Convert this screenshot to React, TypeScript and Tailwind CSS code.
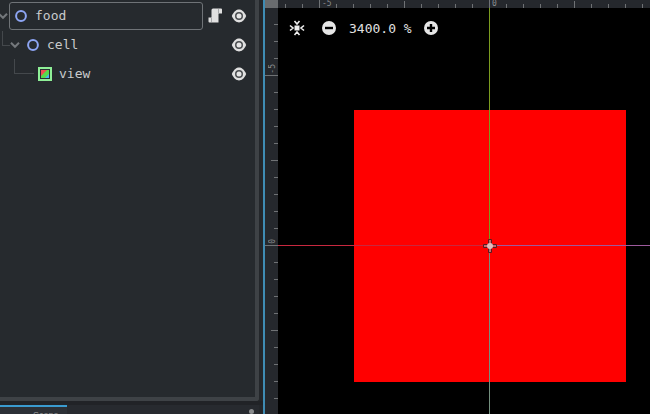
import React from "react";

const mono = { fontFamily: '"DejaVu Sans Mono", monospace' };

function Eye() {
  return (
    <svg width="16" height="16" viewBox="0 0 16 16" className="shrink-0">
      <path d="M0.8 8 C3 3.2 5.5 1.6 8 1.6 C10.5 1.6 13 3.2 15.2 8 C13 12.8 10.5 14.4 8 14.4 C5.5 14.4 3 12.8 0.8 8 Z" fill="#e0e0e0" />
      <circle cx="8" cy="8" r="4" fill="#4a4d50" />
      <circle cx="8" cy="8" r="2.5" fill="#e6e6e6" />
    </svg>
  );
}

function Ring() {
  return (
    <svg width="14" height="14" viewBox="0 0 14 14" className="shrink-0">
      <circle cx="7" cy="7" r="4.9" fill="none" stroke="#8da5f3" strokeWidth="2" />
    </svg>
  );
}

function Chevron() {
  return (
    <svg width="10" height="8" viewBox="0 0 10 8" className="shrink-0">
      <path d="M1 1.8 L5 5.8 L9 1.8" fill="none" stroke="#74787c" strokeWidth="2" />
    </svg>
  );
}

function Script() {
  return (
    <svg width="14" height="15" viewBox="0 0 14 15" className="shrink-0">
      <path d="M5 0.5 H13 Q14 0.5 14 1.5 V5.5 H10.5 V14.5 H1.5 Q0.5 14.5 0.5 13.5 V9.5 H3.5 V2 Q3.5 0.5 5 0.5 Z" fill="#e0e0e0" />
      <path d="M10.5 1 V5 M3.5 10 V14" stroke="#a5a7a9" strokeWidth="1" />
    </svg>
  );
}

function ViewIcon() {
  return (
    <svg width="14" height="14" viewBox="0 0 14 14" className="shrink-0">
      <rect x="1" y="1" width="12" height="12" fill="#2a2e33" stroke="#8eef97" strokeWidth="2" />
      <path d="M3 3 H11 V11 H3 Z" fill="#56dc4a" />
      <path d="M3 3 H9 L3 9 Z" fill="#ef5050" />
      <path d="M11 11 H7 L11 7 Z" fill="#45b8ef" />
    </svg>
  );
}

function Row({ sel, children, label, script }: { sel?: boolean; children: React.ReactNode; label: string; script?: boolean }) {
  return (
    <div className="flex items-center h-[29px] relative">
      {sel && <div className="absolute left-[9px] top-[1px] w-[194px] h-[28px] border border-[#6f7377] rounded-[3px]" />}
      <div className="flex items-center flex-1">
        {children}
        <span className="text-[13px] text-[#c9cbcd] ml-[7px] leading-none">{label}</span>
      </div>
      {script && <div className="mr-[9px]"><Script /></div>}
      <div className="mr-[8px]"><Eye /></div>
    </div>
  );
}

type Kind = "major" | "mid" | "minor";
const kindOf = (offset: number): Kind => (offset % 170 === 0 ? "major" : offset % 85 === 0 ? "mid" : "minor");

const hTicks = Array.from({ length: 22 }, (_, i) => 285 + i * 17);
const vTicks = Array.from({ length: 23 }, (_, i) => 24 + i * 17);
const hLabels: Record<number, string> = { 319: "-5", 489: "0" };
const vLabels: Record<number, string> = { 75: "-5", 245: "0", 415: "5" };

function HTick({ x }: { x: number }) {
  const kind = kindOf(x - 319);
  return (
    <div className="relative w-[17px] h-full shrink-0 flex items-end">
      <div className={`w-px bg-[#6f7275] ${kind === "major" ? "h-[8px]" : kind === "mid" ? "h-[7px]" : "h-[4px]"}`} />
      {hLabels[x] && <span className="ml-[2px] self-start text-[8px] leading-[7px] text-[#8a8d90]">{hLabels[x]}</span>}
    </div>
  );
}

function VTick({ y }: { y: number }) {
  const kind = kindOf(y - 75);
  return (
    <div className="relative h-[17px] w-full shrink-0 flex flex-col items-end">
      <div className={`h-px bg-[#6f7275] ${kind === "major" ? "w-[13px]" : kind === "mid" ? "w-[7px]" : "w-[4px]"}`} />
      {vLabels[y] && (
        <span className="absolute left-[4px] bottom-[18px] text-[8px] leading-[8px] text-[#8a8d90] [writing-mode:vertical-rl] rotate-180">{vLabels[y]}</span>
      )}
    </div>
  );
}

export default function App() {
  return (
    <div className="relative flex w-[650px] h-[414px] overflow-hidden bg-[#24272b]" style={mono}>
      <div className="w-[263px] shrink-0 flex flex-col">
        <div className="h-[401px] w-[259px] shrink-0 border-r-4 border-b-4 border-[#3e4246] bg-[#262a2e] rounded-br-[3px] relative pt-[1px]">
          <div className="absolute left-[2px] top-[31px] w-[8px] h-[15px] border-l border-b border-[#44484c]" />
          <div className="absolute left-[14px] top-[59px] w-[20px] h-[15px] border-l border-b border-[#44484c]" />
          <div className="relative flex flex-col">
            <Row sel label="food" script>
              <div className="flex items-center gap-[6px] -ml-[2px]"><Chevron /><Ring /></div>
            </Row>
            <Row label="cell">
              <div className="flex items-center gap-[6px] ml-[10px]"><Chevron /><Ring /></div>
            </Row>
            <Row label="view">
              <div className="ml-[38px]"><ViewIcon /></div>
            </Row>
          </div>
        </div>
        <div className="h-[4px] bg-[#212327]" />
        <div className="flex-1 w-[259px] flex justify-between bg-[#272a2f] overflow-hidden pr-[5px]">
          <div className="w-[67px] h-full border-t-2 border-[#3a9bd0] bg-[#2c3036] overflow-hidden pl-[33px]">
            <span className="text-[9px] leading-none text-[#8f9194] block mt-[4px]" style={{ fontFamily: '"Liberation Sans", sans-serif' }}>Scene</span>
          </div>
          <div className="mt-[4px] w-[5px] h-[5px] rounded-full bg-[#8a8c8e]" />
        </div>
      </div>

      <div className="w-[2px] shrink-0 bg-[#3f8cb4]" />

      <div className="flex-1 flex flex-col bg-black overflow-hidden">
        <div className="h-[8px] shrink-0 flex bg-[#25282d]">
          <div className="w-[13px] h-full shrink-0 bg-[#696c6f]" />
          <div className="flex h-full pl-[7px]">
            {hTicks.map((x) => <HTick key={x} x={x} />)}
          </div>
        </div>
        <div className="flex-1 flex min-h-0">
          <div className="w-[13px] shrink-0 flex flex-col pt-[16px] bg-[#25282d] overflow-hidden">
            {vTicks.map((y) => <VTick key={y} y={y} />)}
          </div>
          <div className="relative flex-1 pl-[76px] pt-[102px]">
            <div className="w-[272px] h-[272px] bg-[#ff0000]" />

            <div className="absolute left-0 top-[237px] w-[211px] h-px bg-[#c8283f]" />
            <div className="absolute left-[211px] top-[237px] w-[161px] h-px bg-[#9d5a9d]" />
            <div className="absolute left-[211px] top-0 w-px h-[237px] bg-[#7b9c1f]" />
            <div className="absolute left-[211px] top-[238px] w-px h-[168px] bg-[#74907f]" />

            <svg width="16" height="16" viewBox="0 0 16 16" className="absolute left-[204px] top-[230px]">
              <path d="M6.5 1.5 H9.5 V6.5 H14.5 V9.5 H9.5 V14.5 H6.5 V9.5 H1.5 V6.5 H6.5 Z" fill="#c26a70" stroke="#5a1a1e" strokeWidth="1" />
              <circle cx="8" cy="8" r="3" fill="#e2bcbc" />
            </svg>

            <div className="absolute left-[11px] top-[12px] h-[16px] flex items-center">
              <svg width="16" height="16" viewBox="0 0 16 16">
                <rect x="5.5" y="5.5" width="5" height="5" fill="#eeeeee" />
                <path d="M1 5.5 L4 8 L1 10.5 M15 5.5 L12 8 L15 10.5 M5.5 1 L8 4 L10.5 1 M5.5 15 L8 12 L10.5 15" fill="none" stroke="#eeeeee" strokeWidth="1.6" />
              </svg>
              <svg width="16" height="16" viewBox="0 0 16 16" className="ml-[16px]">
                <circle cx="8" cy="8" r="7" fill="#e6e6e6" />
                <rect x="4" y="6.8" width="8" height="2.4" fill="#000000" />
              </svg>
              <span className="ml-[12px] w-[70px] text-[13px] leading-none text-[#e0e0e0]">3400.0 %</span>
              <svg width="16" height="16" viewBox="0 0 16 16" className="ml-[4px]">
                <circle cx="8" cy="8" r="7" fill="#e6e6e6" />
                <path d="M4 6.8 H6.8 V4 H9.2 V6.8 H12 V9.2 H9.2 V12 H6.8 V9.2 H4 Z" fill="#000000" />
              </svg>
            </div>
          </div>
        </div>
      </div>
    </div>
  );
}
